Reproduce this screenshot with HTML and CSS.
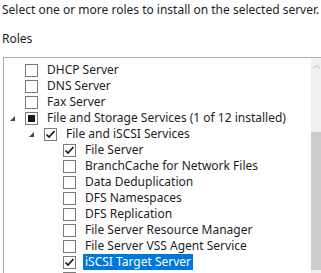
FILE: index.html
```html
<!DOCTYPE html>
<html>
<head>
<meta charset="utf-8">
<link rel="stylesheet" href="styles.css">
</head>
<body>
<div class="page">
  <p class="intro">Select one or more roles to install on the selected server.</p>
  <p class="heading">Roles</p>
  <div class="listbox">
    <ul class="tree">
      <li class="row lvl0"><span class="tog"></span><span class="cb"></span><span class="lbl">DHCP Server</span></li>
      <li class="row lvl0"><span class="tog"></span><span class="cb"></span><span class="lbl">DNS Server</span></li>
      <li class="row lvl0"><span class="tog"></span><span class="cb"></span><span class="lbl">Fax Server</span></li>
      <li class="row lvl0"><span class="tog open"></span><span class="cb partial"><span class="sq"></span></span><span class="lbl">File and Storage Services (1 of 12 installed)</span></li>
      <li class="row lvl1"><span class="tog open"></span><span class="cb"><svg viewBox="0 0 11 11" class="tick"><polyline points="1.5,5.5 4,8 9.5,2"/></svg></span><span class="lbl">File and iSCSI Services</span></li>
      <li class="row lvl2"><span class="tog"></span><span class="cb"><svg viewBox="0 0 11 11" class="tick"><polyline points="1.5,5.5 4,8 9.5,2"/></svg></span><span class="lbl">File Server</span></li>
      <li class="row lvl2"><span class="tog"></span><span class="cb"></span><span class="lbl">BranchCache for Network Files</span></li>
      <li class="row lvl2"><span class="tog"></span><span class="cb"></span><span class="lbl">Data Deduplication</span></li>
      <li class="row lvl2"><span class="tog"></span><span class="cb"></span><span class="lbl">DFS Namespaces</span></li>
      <li class="row lvl2"><span class="tog"></span><span class="cb"></span><span class="lbl">DFS Replication</span></li>
      <li class="row lvl2"><span class="tog"></span><span class="cb"></span><span class="lbl">File Server Resource Manager</span></li>
      <li class="row lvl2"><span class="tog"></span><span class="cb"></span><span class="lbl">File Server VSS Agent Service</span></li>
      <li class="row lvl2"><span class="tog"></span><span class="cb"><svg viewBox="0 0 11 11" class="tick"><polyline points="1.5,5.5 4,8 9.5,2"/></svg></span><span class="lbl selected">iSCSI Target Server</span></li>
      <li class="row lvl2"><span class="tog"></span><span class="cb"></span></li>
    </ul>
    <div class="scrollbar">
      <div class="arrow"><svg viewBox="0 0 8 5" class="chev"><polyline points="0.5,4.5 4,1 7.5,4.5"/></svg></div>
      <div class="thumb"></div>
    </div>
  </div>
</div>
</body>
</html>
```

FILE: styles.css
```css
html, body {
  margin: 0;
  padding: 0;
  background: #ffffff;
  overflow: hidden;
}
body {
  width: 321px;
  height: 273px;
  font-family: "Noto Sans", "Open Sans", sans-serif;
  font-size: 12px;
  color: #1e1e1e;
}
.page {
  display: flex;
  flex-direction: column;
}
.intro {
  margin: 0;
  padding: 2px 0 0 2px;
  line-height: 16px;
  white-space: nowrap;
}
.heading {
  margin: 13px 0 0 2px;
  line-height: 16px;
}
.listbox {
  margin: 10px 0 0 3px;
  border-top: 1px solid #abadb3;
  border-left: 1px solid #abadb3;
  display: flex;
  width: 330px;
  height: 240px;
}
.tree {
  list-style: none;
  margin: 0;
  padding: 4px 0 0 0;
  width: 307px;
  flex: none;
}
.row {
  display: flex;
  align-items: center;
  height: 16px;
  white-space: nowrap;
}
.lvl0 { padding-left: 2px; }
.lvl1 { padding-left: 21px; }
.lvl2 { padding-left: 40px; }
.tog {
  width: 19px;
  height: 16px;
  flex: none;
  position: relative;
}
.tog.open::after {
  content: "";
  position: absolute;
  left: 4px;
  top: 6px;
  width: 0;
  height: 0;
  border-left: 5px solid transparent;
  border-bottom: 5px solid #444444;
}
.cb {
  width: 11px;
  height: 11px;
  border: 1px solid #7a7a7a;
  background: #ffffff;
  flex: none;
  display: flex;
  align-items: center;
  justify-content: center;
}
.cb .sq {
  width: 7px;
  height: 7px;
  background: #1a1a1a;
}
.tick {
  width: 11px;
  height: 11px;
}
.tick polyline {
  fill: none;
  stroke: #1a1a1a;
  stroke-width: 1.7;
}
.lbl {
  margin-left: 7px;
  padding: 0 2px;
  line-height: 16px;
}
.lbl.selected {
  background: #0078d7;
  color: #ffffff;
}
.scrollbar {
  width: 17px;
  flex: none;
  background: #f0f0f0;
  display: flex;
  flex-direction: column;
}
.arrow {
  height: 17px;
  display: flex;
  justify-content: center;
  align-items: center;
}
.chev {
  width: 7px;
  height: 5px;
  margin-left: -6px;
}
.chev polyline {
  fill: none;
  stroke: #a8a8a8;
  stroke-width: 1;
}
.thumb {
  margin-top: 57px;
  height: 138px;
  background: #cdcdcd;
}
```
